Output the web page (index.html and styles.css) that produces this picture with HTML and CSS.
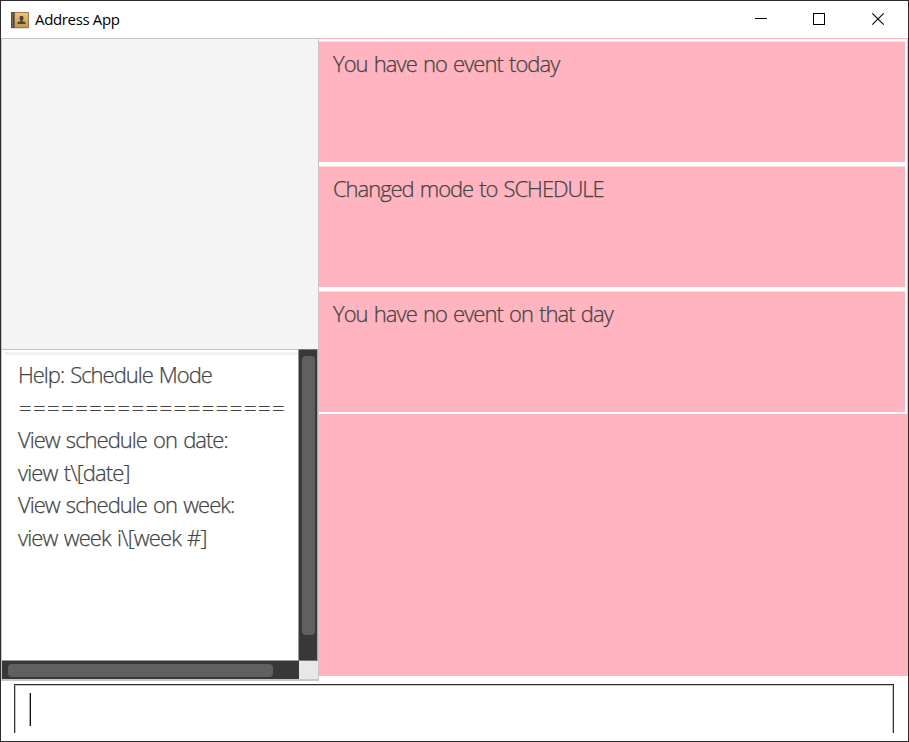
FILE: index.html
```
<!DOCTYPE html>
<html lang="en">
<head>
<meta charset="utf-8">
<title>Address App</title>
<link rel="stylesheet" href="styles.css">
</head>
<body>
<div class="window">
  <header class="titlebar">
    <svg class="app-icon" width="18" height="17" viewBox="0 0 18 17">
      <defs><linearGradient id="cover" x1="0" y1="0" x2="0" y2="1"><stop offset="0" stop-color="#e8c483"/><stop offset="1" stop-color="#cb9648"/></linearGradient></defs>
      <rect x="0.5" y="16" width="17" height="1" fill="#ddd"/>
      <rect width="18" height="16" fill="#a77b3e"/>
      <rect x="4" y="1" width="13" height="14" fill="url(#cover)"/>
      <rect width="3.5" height="16" fill="#544a43"/>
      <rect x="1" y="1" width="1" height="14" fill="#756a61"/>
      <ellipse cx="10.5" cy="6.2" rx="2" ry="2.4" fill="#4c4339"/>
      <path d="M9.6 7h1.8v2.2l3 .9v1.9H6.600v-1.900l3-.9z" fill="#4c4339"/>
    </svg>
    <span class="title">Address App</span>
    <svg class="controls" width="130" height="14" viewBox="0 0 130 14" fill="none" stroke="#000">
      <path d="M0 6.500h12"/>
      <rect x="58.500" y="1.500" width="11" height="11"/>
      <path d="M117.300 1.300l11.400 11.400M128.700 1.300l-11.400 11.400" stroke-width="1.100"/>
    </svg>
  </header>
  <main class="content">
    <section class="side">
      <div class="blank"></div>
      <div class="help">
        <div class="help-text">
          <p class="heading">Help: Schedule Mode</p>
          <p class="rule">===================</p>
          <p>View schedule on date:</p>
          <p class="syntax">view t\[date]</p>
          <p>View schedule on week:</p>
          <p class="syntax">view week i\[week #]</p>
        </div>
        <div class="vbar"><div class="vthumb"></div></div>
        <div class="hbar"><div class="hthumb"></div></div>
        <div class="corner"></div>
      </div>
    </section>
    <section class="list">
      <div class="rows">
        <div class="row">You have no event today</div>
        <div class="row mode">Changed mode to SCHEDULE</div>
        <div class="row">You have no event on that day</div>
      </div>
    </section>
  </main>
  <footer class="command"><div class="field"><div class="caret"></div></div></footer>
</div>
</body>
</html>
```
FILE: styles.css
```
* { box-sizing: border-box; }
body { margin: 0; overflow: hidden; font-family: "Open Sans", "Noto Sans", sans-serif; }
p { margin: 0; }
.window { width: 909px; height: 742px; background: #fff; border: 1px solid #2b2a2d; display: flex; flex-direction: column; }
.titlebar { height: 37px; flex: none; display: flex; align-items: center; padding: 0 23px 0 10px; }
.app-icon { display: block; margin-top: 1px; }
.title { margin: -2px 0 0 6px; font-size: 15px; line-height: 20px; letter-spacing: -0.35px; color: #000; white-space: nowrap; }
.controls { display: block; margin-left: auto; margin-top: -1px; }
.content { height: 643px; flex: none; display: flex; align-items: flex-start; }
.side { width: 318px; height: 643px; flex: none; border: 1px solid #c5c8c8; border-bottom: 2px solid #c8c8c8; display: flex; flex-direction: column; }
.blank { height: 310px; flex: none; background: #f4f4f4; }
.help { height: 330px; display: grid; grid-template-columns: 297px 19px; grid-template-rows: 312px 18px; }
.help-text { border-top: 1px solid #c5c5c5; border-bottom: 1px solid #999; border-right: 1px solid #999; padding: 8px 0 0 16px; background: linear-gradient(#f2f2f2, #f2f2f2) 3px 2px / 293px 3px no-repeat #fff; overflow: hidden; }
.help-text p, .row { font-size: 22px; font-weight: 300; color: #444; -webkit-text-stroke: 0.25px #444; white-space: nowrap; letter-spacing: -0.98px; word-spacing: 1.400px; }
.help-text p { height: 32.500px; line-height: 32px; }
.help-text .heading { letter-spacing: -1.020px; }
.help-text .rule { letter-spacing: 1.500px; padding-left: 1px; }
.help-text .syntax { letter-spacing: -0.9px; }
.vbar { background: #383838; border-top: 1px solid #777; border-right: 1px solid #aaa; border-bottom: 1px solid #777; padding: 6px 3px; }
.vthumb { width: 13px; height: 279px; border-radius: 4px; background: #606060; }
.hbar { background: #383838; padding: 3px 6px; }
.hthumb { width: 265px; height: 13px; border-radius: 4px; background: #606060; }
.corner { background: #e8e8e8; }
.list { flex: 1; height: 638px; background: #ffb4bf; padding: 1px 1px 0 0; }
.rows { background: #fff; padding: 3px 2px 2px 0; display: flex; flex-direction: column; gap: 5px; }
.row { height: 120px; background: #ffb4bf; padding: 5px 14px; line-height: 32px; box-shadow: 0 -1px 0 #ffdbe0; letter-spacing: -0.96px; }
.row.mode { letter-spacing: -1.030px; }
.command { flex: 1; padding: 3px 14px 0 13px; }
.field { height: 49px; border: 1px solid #303030; border-bottom: 0; box-shadow: inset 1px 1px 0 #c4c4c4, inset -1px 0 0 #c4c4c4; padding: 8px 0 0 14px; }
.caret { width: 2px; height: 33px; border-left: 1px solid #aaa; background: #111; }
```
